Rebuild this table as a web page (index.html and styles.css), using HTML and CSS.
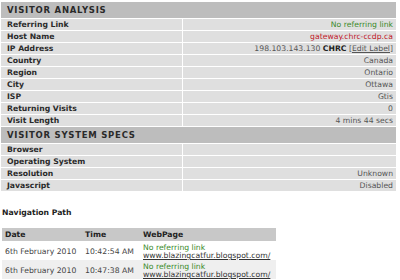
FILE: index.html
```html
<!DOCTYPE html>
<html>
<head>
<meta charset="utf-8">
<link rel="stylesheet" href="styles.css">
</head>
<body>
<table class="stats">
  <tr><th colspan="2" class="sec">VISITOR ANALYSIS</th></tr>
  <tr><td class="lbl">Referring Link</td><td class="val green">No referring link</td></tr>
  <tr><td class="lbl">Host Name</td><td class="val red">gateway.chrc-ccdp.ca</td></tr>
  <tr><td class="lbl">IP Address</td><td class="val">198.103.143.130 <b>CHRC</b> [<span class="u">Edit Label</span>]</td></tr>
  <tr><td class="lbl">Country</td><td class="val">Canada</td></tr>
  <tr><td class="lbl">Region</td><td class="val">Ontario</td></tr>
  <tr><td class="lbl">City</td><td class="val">Ottawa</td></tr>
  <tr><td class="lbl">ISP</td><td class="val">Gtis</td></tr>
  <tr><td class="lbl">Returning Visits</td><td class="val">0</td></tr>
  <tr><td class="lbl">Visit Length</td><td class="val">4 mins 44 secs</td></tr>
  <tr><th colspan="2" class="sec">VISITOR SYSTEM SPECS</th></tr>
  <tr><td class="lbl">Browser</td><td class="val"></td></tr>
  <tr><td class="lbl">Operating System</td><td class="val"></td></tr>
  <tr><td class="lbl">Resolution</td><td class="val">Unknown</td></tr>
  <tr><td class="lbl">Javascript</td><td class="val">Disabled</td></tr>
</table>
<div class="navtitle">Navigation Path</div>
<table class="nav">
  <tr class="nhead"><th class="c1">Date</th><th class="c2">Time</th><th class="c3">WebPage</th></tr>
  <tr class="r1"><td>6th February 2010</td><td>10:42:54 AM</td><td class="pg"><span class="green">No referring link</span><br><span class="u">www.blazingcatfur.blogspot.com/</span></td></tr>
  <tr class="r2"><td>6th February 2010</td><td>10:47:38 AM</td><td class="pg"><span class="green">No referring link</span><br><span class="u">www.blazingcatfur.blogspot.com/</span></td></tr>
</table>
</body>
</html>
```
FILE: styles.css
```css
html, body {
  margin: 0;
  padding: 0;
  background: #fff;
}
body {
  font-family: "DejaVu Sans", Verdana, sans-serif;
  font-size: 7.7px;
  color: #333;
  padding: 1px 3px 0 0;
}
.stats {
  width: 397px;
  border-collapse: separate;
  border-spacing: 1px;
  background: #fff;
  margin: 0;
}
.stats td, .stats th {
  padding: 0 6px;
  height: 11px;
  line-height: 11px;
}
.sec {
  background: #bdbdbd;
  text-align: left;
  font-weight: bold;
  font-size: 8.5px;
  letter-spacing: 0.75px;
  height: 16px !important;
  line-height: 16px !important;
  color: #2a2a2a;
}
.lbl {
  background: #dfdfdf;
  font-weight: bold;
  width: 169px;
  color: #2a2a2a;
}
.val {
  background: #dfdfdf;
  text-align: right;
  color: #555;
  padding-right: 3px !important;
}
.green { color: #3a8a2a; }
.red { color: #c0192a; }
.u { text-decoration: underline; }
.val b { color: #222; }
.navtitle {
  font-weight: bold;
  color: #222;
  margin: 15px 0 0 2px;
  line-height: 11px;
}
.nav {
  margin: 10px 0 0 2px;
  border-collapse: collapse;
  width: 274px;
}
.nav th {
  background: #c8c8c8;
  text-align: left;
  font-weight: bold;
  color: #222;
  height: 13px;
  line-height: 13px;
  padding: 0 3px;
}
.nav td {
  padding: 3px 3px 0 3px;
  height: 16px;
  color: #444;
  line-height: 8px;
  vertical-align: middle;
}
.r1 { background: #fff; }
.r2 { background: #efefef; }
.c1 { width: 74px; }
.c2 { width: 52px; }
.pg .u { color: #333; }
```
